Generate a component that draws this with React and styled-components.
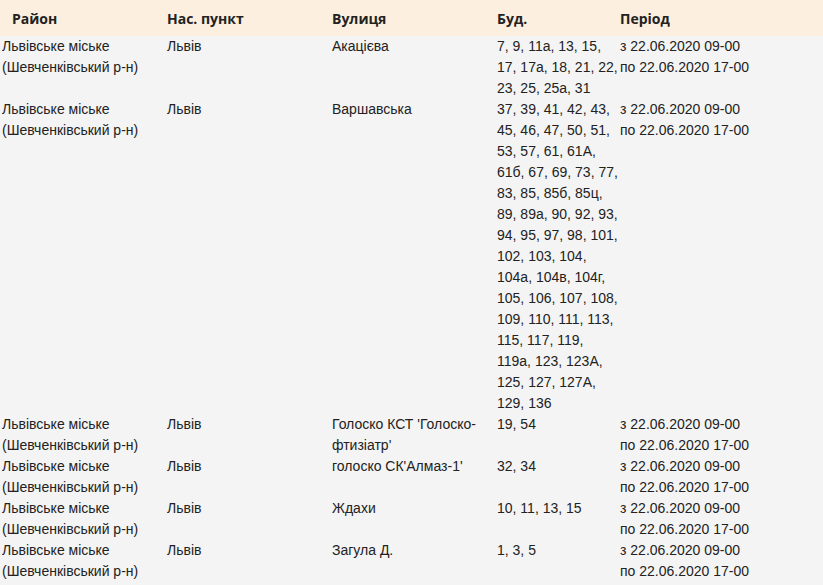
import React from "react";
import styled, { createGlobalStyle } from "styled-components";

const GlobalStyle = createGlobalStyle`
  html, body {
    margin: 0;
    padding: 0;
    background: #f4f4f4;
  }
`;

const DISTRICT = ["Львівське міське", "(Шевченківський р-н)"];
const PERIOD = ["з 22.06.2020 09-00", "по 22.06.2020 17-00"];

const rows = [
  {
    street: "Акацієва",
    houses: "7, 9, 11а, 13, 15, 17, 17а, 18, 21, 22, 23, 25, 25а, 31",
  },
  {
    street: "Варшавська",
    houses:
      "37, 39, 41, 42, 43, 45, 46, 47, 50, 51, 53, 57, 61, 61А, 61б, 67, 69, 73, 77, 83, 85, 85б, 85ц, 89, 89а, 90, 92, 93, 94, 95, 97, 98, 101, 102, 103, 104, 104а, 104в, 104г, 105, 106, 107, 108, 109, 110, 111, 113, 115, 117, 119, 119а, 123, 123А, 125, 127, 127А, 129, 136",
  },
  { street: "Голоско КСТ 'Голоско-фтизіатр'", houses: "19, 54" },
  { street: "голоско СК'Алмаз-1'", houses: "32, 34" },
  { street: "Ждахи", houses: "10, 11, 13, 15" },
  { street: "Загула Д.", houses: "1, 3, 5" },
];

const columns = [
  { title: "Район", width: 165 },
  { title: "Нас. пункт", width: 165 },
  { title: "Вулиця", width: 165 },
  { title: "Буд.", width: 123 },
  { title: "Період", width: 205 },
];

const App = () => (
  <>
    <GlobalStyle />
    <Table>
      <colgroup>
        {columns.map((c) => (
          <col key={c.title} style={{ width: c.width }} />
        ))}
      </colgroup>
      <thead>
        <tr>
          {columns.map((c, i) => (
            <HeadCell key={c.title} $first={i === 0}>
              {c.title}
            </HeadCell>
          ))}
        </tr>
      </thead>
      <tbody>
        {rows.map((r) => (
          <tr key={r.street}>
            <Cell>
              {DISTRICT[0]}
              <br />
              {DISTRICT[1]}
            </Cell>
            <Cell>Львів</Cell>
            <Cell>{r.street}</Cell>
            <Cell>{r.houses}</Cell>
            <Cell>
              {PERIOD[0]}
              <br />
              {PERIOD[1]}
            </Cell>
          </tr>
        ))}
      </tbody>
    </Table>
  </>
);

export default App;

const Table = styled.table`
  width: 823px;
  table-layout: fixed;
  border-collapse: collapse;
  border-spacing: 0;
  background: #f4f4f4;
  color: #222;
`;

const HeadCell = styled.th`
  height: 36px;
  padding: 0 0 0 ${(p) => (p.$first ? "12px" : "2px")};
  background: #fcefdf;
  text-align: left;
  vertical-align: middle;
  font-family: "Open Sans", "Liberation Sans", sans-serif;
  font-weight: 700;
  font-size: 14px;
  color: #222;
`;

const Cell = styled.td`
  padding: 0 0 0 2px;
  vertical-align: top;
  font-family: "Liberation Sans", Arial, sans-serif;
  font-size: 14px;
  line-height: 21px;
  color: #222;
  overflow-wrap: break-word;
`;
